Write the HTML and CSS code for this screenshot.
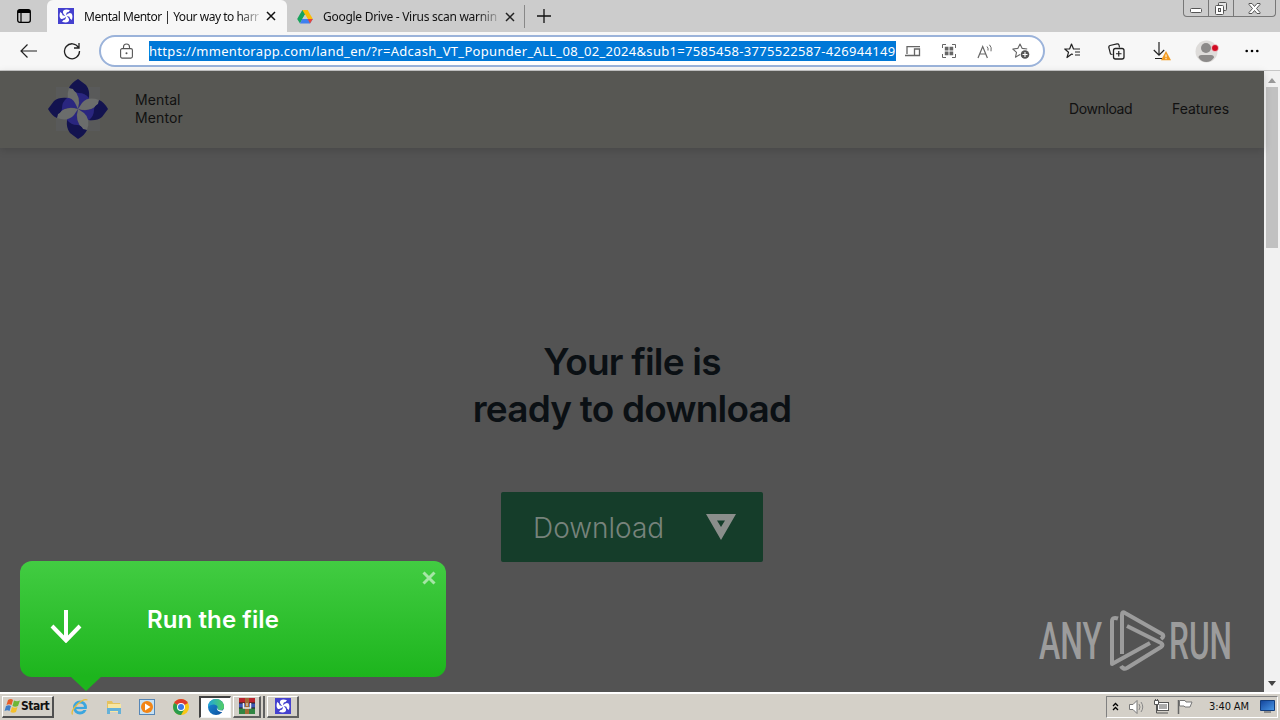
FILE: index.html
```html
<!DOCTYPE html>
<html lang="en">
<head>
    <meta charset="UTF-8">
    <meta name="viewport" content="width=device-width, initial-scale=1.0">
    <title>Mental Mentor | Your way to harmony</title>
    <link rel="stylesheet" href="styles.css">
</head>
<body>
    <svg width="0" height="0" class="defs">
        <defs>
            <g id="petal">
                <path d="M21 9Q17 20 24 26L30 30Q33 18 26 10Z" fill="#6b6d6c"/>
                <path d="M25 10L41 16Q42 24 36 27L30 30Q34 18 25 10Z" fill="#2a267f"/>
                <path d="M30 0L38 6Q42 11 41 19Q37 14 31 14Q27 14 25 10L21 9Q23 4 30 0Z" fill="#13134f"/>
            </g>
            <path id="blade" d="M8 8.500Q3.500 5 5.500 2.500Q7.500.8 12 2.200L10.500 4Q7.500 4 8.500 8Z"/>
            <g id="fan">
                <use href="#blade"/>
                <use href="#blade" transform="rotate(90 8 8)"/>
                <use href="#blade" transform="rotate(180 8 8)"/>
                <use href="#blade" transform="rotate(270 8 8)"/>
            </g>
            <linearGradient id="edge" x1="0" y1="0" x2="1" y2="1">
                <stop offset="0" stop-color="#1b8ed8"/>
                <stop offset="1" stop-color="#0b4c9c"/>
            </linearGradient>
            <linearGradient id="edge2" x1="0" y1="0" x2="1" y2="0">
                <stop offset="0" stop-color="#1fa4dd"/>
                <stop offset="1" stop-color="#53cf62"/>
            </linearGradient>
            <linearGradient id="screen" x1="0" y1="0" x2="1" y2="1">
                <stop offset="0" stop-color="#12439a"/>
                <stop offset="1" stop-color="#4b9ae8"/>
            </linearGradient>
        </defs>
    </svg>

    <div class="tabbar">
        <div class="tab-actions">
            <svg width="14" height="14" viewBox="0 0 14 14"><rect x=".7" y=".7" width="12.6" height="12.6" rx="2" fill="none" stroke="#000" stroke-width="1.3"/><path d="M1 1h12v3H1z"/><path d="M4 3v10" stroke="#000" stroke-width="1.2"/></svg>
        </div>
        <div class="tab active">
            <svg width="16" height="16" viewBox="0 0 16 16"><rect width="16" height="16" fill="#4541cf"/><use href="#fan" fill="#fff"/></svg>
            <span class="title">Mental Mentor | Your way to harr</span>
            <svg class="close" width="10" height="10" viewBox="0 0 10 10"><path d="M1 1l8 8M9 1L1 9" stroke="#111" stroke-width="1.5"/></svg>
        </div>
        <div class="tab second">
            <svg width="16" height="14" viewBox="0 0 16 14"><path d="M5.3 0h5.2L3 13.5.2 9z" fill="#18a35b"/><path d="M5.3 0h5.4l5.1 9h-5.1z" fill="#fbbc05"/><path d="M5.2 9h10.6L13 13.6H3z" fill="#3f7ff0"/><path d="M8 4.4L10.7 9H5.3z" fill="#ccc"/><path d="M10.7 9h5.1L13 13.6z" fill="#e8453a"/></svg>
            <span class="title">Google Drive - Virus scan warnin</span>
            <svg class="close" width="10" height="10" viewBox="0 0 10 10"><path d="M1 1l8 8M9 1L1 9" stroke="#222" stroke-width="1.5"/></svg>
        </div>
        <svg class="plus" width="14" height="14" viewBox="0 0 14 14"><path d="M7 0v14M0 7h14" stroke="#111" stroke-width="1.3"/></svg>
        <div class="window-buttons">
            <span><svg width="12" height="5" viewBox="0 0 12 5"><rect x=".5" y=".5" width="11" height="4" rx="1" fill="#fff" stroke="#555"/></svg></span>
            <span><svg width="14" height="13" viewBox="0 0 14 13"><g fill="#e4e4e4" stroke="#555"><rect x="4.500" y=".5" width="8" height="8" rx="1"/><rect x="1.500" y="3.500" width="8" height="9" rx="1" fill="#fff"/><rect x="4.500" y="6.500" width="2" height="3"/></g></svg></span>
            <span><svg width="13" height="11" viewBox="0 0 13 11"><path d="M1 .5h3l2.500 3L9 .5h3v1L8.500 5.500 12 9.500v1H9l-2.500-3-2.500 3H1v-1l3.500-4L1 1.500z" fill="#fff" stroke="#555"/></svg></span>
        </div>
    </div>

    <div class="toolbar">
        <svg class="back" width="17" height="14" viewBox="0 0 17 14"><path d="M7.500.5L1 7l6.500 6.500M1 7h16" fill="none" stroke="#222" stroke-width="1.200"/></svg>
        <svg class="reload" width="18" height="18" viewBox="0 0 18 18"><path d="M15.500 5.500A7.500 7.500 0 1 0 16.500 9M16 1v5h-5" fill="none" stroke="#222" stroke-width="1.300"/></svg>
        <div class="address">
            <svg class="lock" width="13" height="16" viewBox="0 0 13 16"><rect x=".6" y="5.600" width="11.800" height="9.500" rx="1.500" fill="none" stroke="#555" stroke-width="1.100"/><path d="M3.500 5.500V4a3 3 0 0 1 6 0v1.500" fill="none" stroke="#555" stroke-width="1.100"/><circle cx="6.500" cy="10.300" r="1" fill="#555"/></svg>
            <span class="url">https://mmentorapp.com/land_en/?r=Adcash_VT_Popunder_ALL_08_02_2024&amp;sub1=7585458-3775522587-426944149</span>
            <svg class="devices" width="16" height="12" viewBox="0 0 16 12"><path d="M9 10.500H0M2 9V1.600h13M9.500 10.500V4h5v6.500z" fill="none" stroke="#666" stroke-width="1.300"/></svg>
            <svg class="apps" width="14" height="14" viewBox="0 0 14 14"><path d="M.5 4V.5H4M10 .5h3.500V4M13.500 10v3.500H10M4 13.500H.5V10" fill="none" stroke="#666"/><path d="M2.800 2.800h3.700v3.700H2.800zM7.500 2.800h3.700v3.700H7.500zM2.800 7.500h3.700v3.700H2.800zM7.500 7.500h3.700v3.700H7.500z" fill="#666"/></svg>
            <svg class="read" width="17" height="15" viewBox="0 0 17 15"><path d="M1 14L5.700 2.500 10.400 14M2.700 10h6" fill="none" stroke="#666" stroke-width="1.200"/><path d="M10 2.500q1.500 1.500 1 4M12.500.8q2.500 2.500 1.500 6.500" fill="none" stroke="#666"/></svg>
            <svg class="fav" width="18" height="16" viewBox="0 0 18 16"><path d="M8 11.500L3.500 14.200 4.500 9.300.8 6l5-.6L8 1l2.200 4.400 5 .6" fill="none" stroke="#666" stroke-width="1.100" stroke-linejoin="round"/><circle cx="13" cy="11.500" r="4.300" fill="#555"/><path d="M13 9v5M10.500 11.500h5" stroke="#fff" stroke-width="1.100"/></svg>
        </div>
        <svg class="favorites" width="17" height="16" viewBox="0 0 17 16"><path d="M9 11.500L7.700 11 3 14.500 4.500 9.300.8 6h4.800L7.500 1l2 5H16M11 9h5M11 12h5" fill="none" stroke="#222" stroke-width="1.200" stroke-linejoin="round"/></svg>
        <svg class="collections" width="17" height="17" viewBox="0 0 17 17"><path d="M4.500 11.500L2.500 11 .8 4.500Q.6 3 2 2.500L9 .9q1.500-.2 2 1l.5 2.600" fill="none" stroke="#222" stroke-width="1.200"/><rect x="5.500" y="5.500" width="10.500" height="10.500" rx="2" fill="#f7f7f7" stroke="#222" stroke-width="1.300"/><path d="M10.750 8v5.500M8 10.750h5.500" stroke="#222" stroke-width="1.200"/></svg>
        <svg class="downloads" width="18" height="19" viewBox="0 0 18 19"><path d="M6 0v13M.8 8L6 13.200 11.200 8M2 16.500h7" fill="none" stroke="#222" stroke-width="1.200"/><path d="M13 9l5 9.200H8z" fill="#f29a1f"/><path d="M13 12.500v2.800M13 16v1.200" stroke="#fff"/></svg>
        <svg class="avatar" width="24" height="23" viewBox="0 0 24 23"><circle cx="11.500" cy="11.500" r="11" fill="#dedcda"/><circle cx="11" cy="8" r="5" fill="#8c8a89"/><path d="M3.500 17.500q0-2.500 3-2.500h9.500q3 0 3 2.500-3 4.500-7.700 4.500T3.500 17.500z" fill="#8c8a89"/><circle cx="20" cy="8" r="3.500" fill="#d10b22" stroke="#f7f7f7" stroke-width=".6"/></svg>
        <svg class="more" width="14" height="4" viewBox="0 0 14 4"><circle cx="1.700" cy="2" r="1.300"/><circle cx="7" cy="2" r="1.300"/><circle cx="12.300" cy="2" r="1.300"/></svg>
    </div>

    <div class="viewport">
        <div class="page">
            <div class="header">
                <svg class="logo" width="60" height="60" viewBox="0 0 60 60">
                    <path d="M8 8h44v44H8z" fill="#5d5e66" opacity=".4"/>
                    <use href="#petal"/>
                    <use href="#petal" transform="rotate(90 30 30)"/>
                    <use href="#petal" transform="rotate(180 30 30)"/>
                    <use href="#petal" transform="rotate(270 30 30)"/>
                </svg>
                <div class="brand">Mental<br>Mentor</div>
                <div class="nav">
                    <span class="nav-download">Download</span>
                    <span class="nav-features">Features</span>
                </div>
            </div>
            <div class="main">
                <h1>Your file is<br>ready to download</h1>
                <div class="download">
                    <span>Download</span>
                    <svg width="30" height="26" viewBox="0 0 30 26"><path fill-rule="evenodd" d="M0 0h30L15 26zM11 6.500L15 13l4-6.500z" fill="#8a8e8b"/></svg>
                </div>
            </div>
            <div class="popup">
                <svg class="arrow" width="32" height="34" viewBox="0 0 32 34"><path d="M16 1v30M2 17l14 14.500L30 17" fill="none" stroke="#fff" stroke-width="4"/></svg>
                <span>Run the file</span>
                <svg class="popup-close" width="14" height="14" viewBox="0 0 14 14"><path d="M1.500 1.500l11 11M12.500 1.500l-11 11" stroke="#a5e6a5" stroke-width="3"/></svg>
            </div>
            <svg class="watermark" width="226" height="62" viewBox="0 0 226 62">
                <g fill="#9c9c9c" font-family="Roboto, sans-serif" font-size="51" font-weight="500">
                    <text x="1" y="49" textLength="63" lengthAdjust="spacingAndGlyphs">ANY</text>
                    <text x="131" y="49" textLength="63" lengthAdjust="spacingAndGlyphs">RUN</text>
                </g>
                <g fill="none" stroke="#9c9c9c" stroke-width="4" stroke-linejoin="round">
                    <path d="M80 8.500q-6-2-6 3v42.500L112 33"/>
                    <path d="M84 44V5q0-4 3-2l37 21q3 2-1 5"/>
                    <path d="M89 16l34 17q3 2 0 4L89 58q-4 2-6-2"/>
                </g>
            </svg>
        </div>
        <div class="scrollbar">
            <svg width="8" height="5" viewBox="0 0 8 5"><path d="M0 5l4-5 4 5z" fill="#999"/></svg>
            <div class="thumb"></div>
            <svg width="8" height="5" viewBox="0 0 8 5"><path d="M0 0h8L4 5z" fill="#444"/></svg>
        </div>
    </div>

    <div class="taskbar">
        <div class="start">
            <svg width="17" height="16" viewBox="0 0 17 16"><path d="M4 2q3-2 5 0L7.500 7Q5 5.500 2.500 7z" fill="#e85c26"/><path d="M10 2.500q3 1.500 6 0L14 8q-3 1.500-5.500 0z" fill="#6fb636"/><path d="M2 8q3-1.500 5 0l-1.500 5q-2-1.500-5 0z" fill="#3f7dc6"/><path d="M8 9q3 1.500 5.500 0L12 14q-3 1.500-5.500 0z" fill="#f5c02c"/></svg>
            <span>Start</span>
        </div>
        <svg class="ie" width="18" height="18" viewBox="0 0 18 18"><circle cx="9" cy="9.500" r="5.500" fill="none" stroke="#3ba6df" stroke-width="3"/><path d="M4 10h11" stroke="#3ba6df" stroke-width="2.200"/><path d="M11.500 12h6v-1h-6z" fill="#d4d0c8"/><path d="M1.500 16.500C-1 12 11 0 16.500 2" fill="none" stroke="#e8bd3a" stroke-width="1.300"/></svg>
        <svg class="explorer" width="16" height="16" viewBox="0 0 16 16"><path d="M1 2h5l1 2h7v9H1z" fill="#e5c25f"/><path d="M2 5h13v8H2z" fill="#f7e6a2"/><path d="M1 9h14v6h-3v-3H4v3H1z" fill="#65b1d8"/></svg>
        <svg class="player" width="16" height="16" viewBox="0 0 16 16"><rect x=".5" y=".5" width="15" height="15" fill="#c6e1f4" stroke="#5686b6"/><circle cx="8" cy="8" r="6" fill="#f28516"/><path d="M6 4.500v7L11.500 8z" fill="#fff"/></svg>
        <svg class="chrome" width="16" height="16" viewBox="0 0 16 16"><circle cx="8" cy="8" r="8" fill="#f9c716"/><path d="M8 8L1.100 4A8 8 0 0 1 14.900 4z" fill="#de3b2e"/><path d="M8 8L1.100 4A8 8 0 0 0 8 16l3.500-6z" fill="#2a9c4c"/><circle cx="8" cy="8" r="4" fill="#fff"/><circle cx="8" cy="8" r="3" fill="#3b78e7"/></svg>
        <div class="task pressed">
            <svg width="16" height="16" viewBox="0 0 16 16"><circle cx="8" cy="8" r="8" fill="url(#edge)"/><path d="M0 8A8 8 0 0 1 16 8q0 3-3.500 3.200-4 0-3-2.200.7-3-3.500-3.500Q2 5.200 0 8z" fill="url(#edge2)"/><path d="M9 8q-.5 3.500 5.500 3.500L16 10v3h-3Q8 12 9 8z" fill="#fff"/></svg>
        </div>
        <div class="task stacked">
            <svg width="16" height="16" viewBox="0 0 16 16"><path d="M0 0h16v5H0z" fill="#b9232d"/><path d="M0 5h16v5H0z" fill="#3c56b4"/><path d="M0 10h16v6H0z" fill="#318543"/><path d="M0 5h16M0 10h16" stroke="#222"/><path d="M6 0h4v16H6z" fill="#a36a36"/><path d="M4.500 5v5h7V5" fill="none" stroke="#eee" stroke-width="1.500"/><path d="M8 5v3" stroke="#eee"/></svg>
        </div>
        <div class="task">
            <svg width="16" height="16" viewBox="0 0 16 16"><rect width="16" height="16" fill="#4541cf"/><use href="#fan" fill="#fff"/></svg>
        </div>
        <div class="tray">
            <svg class="chevrons" width="7" height="9" viewBox="0 0 7 9"><path d="M1 4l2.500-2.500L6 4M1 8l2.500-2.500L6 8" fill="none" stroke="#000" stroke-width="1.300"/></svg>
            <svg class="sound" width="16" height="14" viewBox="0 0 16 14"><path d="M.5 4.500H4l4-4v13l-4-4H.5z" fill="#fff" stroke="#777"/><path d="M10 4q2 3 0 6M12 2q3.500 5 0 10" fill="none" stroke="#888"/></svg>
            <svg class="network" width="16" height="15" viewBox="0 0 16 15"><rect x="4.500" y="3.500" width="11" height="8" fill="#fff" stroke="#555"/><path d="M6 5h8v5H6z" fill="#aaa"/><path d="M7 14h8" stroke="#555"/><path d="M3.500 6v8H7" fill="none" stroke="#555"/><path d="M1.500 1.500h4v4h-4zM2.500 0v2M4.500 0v2" fill="#fff" stroke="#555"/></svg>
            <svg class="flag" width="16" height="15" viewBox="0 0 16 15"><path d="M1.500 1v14" stroke="#666" stroke-width="1.500"/><path d="M2.500 1.500H8L9 3h6l-2 5H8L7 7H2.500z" fill="#fff" stroke="#777"/></svg>
            <span class="clock">3:40 AM</span>
            <svg class="desktop" width="15" height="13" viewBox="0 0 15 13"><path d="M.5.5h14v10H.5z" fill="url(#screen)" stroke="#123d7c"/><path d="M4 12h7" stroke="#777" stroke-width="1.500"/></svg>
        </div>
    </div>
</body>
</html>
```

FILE: styles.css
```css
* {
    margin: 0;
    padding: 0;
    box-sizing: border-box;
}

body {
    width: 1280px;
    height: 720px;
    overflow: hidden;
    font-family: 'Noto Sans', sans-serif;
    color: #111;
}

svg {
    display: block;
    flex-shrink: 0;
}

.defs {
    position: absolute;
}

/* tabs */
.tabbar {
    height: 32px;
    background: #ccc;
    display: flex;
}

.tab-actions {
    width: 47px;
    padding: 9px 0 0 17px;
}

.tab {
    display: flex;
    align-items: center;
    font-size: 12px;
    height: 32px;
}

.tab.active {
    width: 240px;
    background: #f7f7f7;
    border-radius: 6px 6px 0 0;
    padding-left: 11px;
}

.tab.second {
    width: 238px;
    height: 23px;
    margin-top: 5px;
    padding-left: 10px;
    border-right: 1px solid #888;
}

.title {
    width: 175px;
    margin-left: 10px;
    white-space: nowrap;
    letter-spacing: -0.28px;
    -webkit-mask-image: linear-gradient(90deg, #000 88%, rgba(0, 0, 0, 0.2));
    mask-image: linear-gradient(90deg, #000 88%, rgba(0, 0, 0, 0.2));
}

.active .title {
    letter-spacing: -0.48px;
}

.close {
    margin-left: 7px;
}

.plus {
    margin: 9px 0 0 12px;
}

.window-buttons {
    display: flex;
    width: 93px;
    height: 17px;
    margin-left: auto;
    margin-right: 4px;
    border: 1px solid #777;
    border-top: none;
    border-radius: 0 0 4px 4px;
}

.window-buttons span {
    display: flex;
    align-items: center;
    justify-content: center;
    width: 25px;
    border-right: 1px solid #777;
}

.window-buttons span:first-child {
    padding-top: 4px;
}

.window-buttons span:last-child {
    width: 41px;
    border-right: none;
}

/* toolbar */
.toolbar {
    height: 39px;
    background: #f7f7f7;
    border-bottom: 1px solid #c6c6c6;
    display: flex;
    align-items: center;
}

.back {
    margin-left: 20px;
}

.reload {
    margin-left: 26px;
}

.address {
    display: flex;
    align-items: center;
    width: 946px;
    height: 32px;
    margin-left: 18px;
    background: #fff;
    border: 2px solid #9bb3da;
    border-radius: 16px;
}

.lock {
    margin-left: 19px;
}

.url {
    width: 747px;
    height: 20px;
    margin-left: 16px;
    background: #0078d7;
    color: #fff;
    font-size: 13px;
    line-height: 20px;
    letter-spacing: 0.31px;
    white-space: nowrap;
}

.devices {
    margin-left: 9px;
}

.apps {
    margin-left: 21px;
}

.read {
    margin-left: 21px;
}

.fav {
    margin-left: 18px;
}

.favorites {
    margin-left: 19px;
}

.collections {
    margin-left: 27px;
}

.downloads {
    margin-left: 28px;
}

.avatar {
    margin-left: 24px;
}

.more {
    margin-left: 26px;
}

/* page */
.viewport {
    display: flex;
    height: 621px;
}

.page {
    position: relative;
    width: 1264px;
    background: #535353;
    font-family: Inter, sans-serif;
}

.header {
    display: flex;
    align-items: center;
    height: 77px;
    padding: 0 35px 2px 48px;
    background: #575753;
    box-shadow: 0 2px 8px rgba(0, 0, 0, 0.15);
}

.brand {
    margin-left: 27px;
    font-size: 14px;
    line-height: 18px;
    letter-spacing: 0.1px;
}

.nav {
    display: flex;
    margin-left: auto;
    font-size: 14px;
}

.nav-download {
    width: 103px;
    letter-spacing: -0.4px;
}

.nav-features {
    letter-spacing: -0.05px;
}

.main {
    display: flex;
    flex-direction: column;
    align-items: center;
    padding-top: 190px;
}

h1 {
    font-size: 37px;
    line-height: 47px;
    font-weight: 600;
    letter-spacing: -0.8px;
    text-align: center;
    white-space: nowrap;
    color: #0b1014;
}

.download {
    display: flex;
    align-items: center;
    justify-content: space-between;
    width: 262px;
    height: 70px;
    margin-top: 60px;
    padding: 0 27px 0 32px;
    background: #153d2a;
    border-radius: 2px;
    font-size: 28px;
    font-weight: 300;
    color: #77837c;
}

.download span {
    padding-top: 2px;
}

.popup {
    position: absolute;
    left: 20px;
    top: 490px;
    width: 426px;
    height: 116px;
    display: flex;
    align-items: center;
    border-radius: 12px;
    background: linear-gradient(#42cc42, #1db51d);
    color: #fff;
    font-size: 24px;
    font-weight: 600;
    letter-spacing: 0.1px;
}

.popup::after {
    content: "";
    position: absolute;
    left: 50px;
    top: 115px;
    border: 16px solid transparent;
    border-top: 15px solid #1db51d;
    border-bottom: none;
}

.arrow {
    margin: 14px 0 0 30px;
}

.popup span {
    margin-left: 65px;
}

.popup-close {
    align-self: flex-start;
    margin: 10px 10px 0 auto;
}

.watermark {
    position: absolute;
    left: 1038px;
    top: 539px;
}

.scrollbar {
    width: 16px;
    background: #f1f1f1;
    display: flex;
    flex-direction: column;
    align-items: center;
    padding: 7px 0 6px;
}

.thumb {
    width: 12px;
    height: 161px;
    margin: 4px 0 auto;
    background: #c1c1c1;
}

/* taskbar */
.taskbar {
    height: 28px;
    display: flex;
    align-items: center;
    padding: 0 2px 1px;
    background: #d4d0c8;
    border-top: 2px solid #fff;
}

.start {
    display: flex;
    align-items: center;
    width: 52px;
    height: 22px;
    padding-left: 1px;
    border: 1px solid #fff;
    border-right: 2px solid #505050;
    border-bottom: 2px solid #505050;
    font-family: 'DejaVu Sans Condensed', 'DejaVu Sans', sans-serif;
    font-size: 12px;
    font-weight: bold;
    letter-spacing: -0.5px;
}

.ie {
    margin-left: 17px;
}

.explorer {
    margin-left: 17px;
}

.player {
    margin-left: 17px;
}

.chrome {
    margin-left: 18px;
}

.task {
    display: flex;
    align-items: center;
    justify-content: center;
    width: 32px;
    height: 22px;
    margin-left: 2px;
    border: 1px solid #fff;
    border-right: 2px solid #606060;
    border-bottom: 2px solid #606060;
}

.task.pressed {
    margin-left: 10px;
    background: #fff;
    border: 1px solid #f4f4f4;
    border-top: 2px solid #404040;
    border-left: 2px solid #404040;
}

.task.stacked {
    width: 28px;
    box-shadow: 2px 0 #d4d0c8, 4px 0 #606060;
}

.task.stacked + .task {
    margin-left: 6px;
}

.tray {
    display: flex;
    align-items: center;
    width: 172px;
    height: 22px;
    margin-left: auto;
    border: 1px solid #fff;
    border-top-color: #808080;
    border-left-color: #808080;
}

.chevrons {
    margin-left: 5px;
}

.sound {
    margin-left: 10px;
}

.network {
    margin-left: 8px;
}

.flag {
    margin-left: 8px;
}

.clock {
    width: 42px;
    margin-left: 16px;
    font-family: 'DejaVu Sans Condensed', 'DejaVu Sans', sans-serif;
    font-size: 11px;
    letter-spacing: -0.1px;
    white-space: nowrap;
}

.desktop {
    margin-left: 9px;
}
```
